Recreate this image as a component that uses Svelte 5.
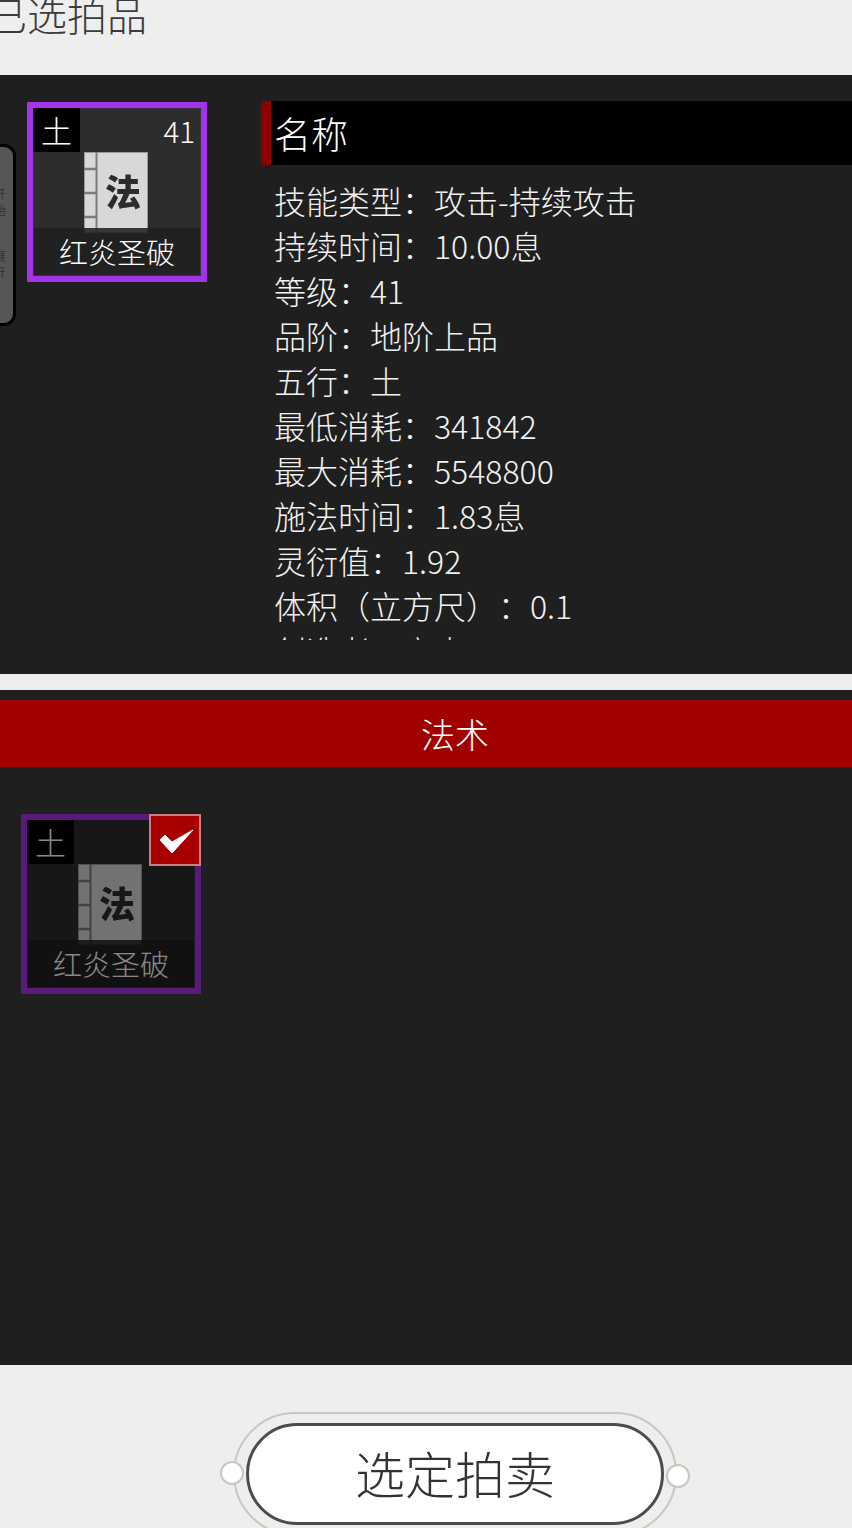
<script lang="ts">
  const rows = [
    "技能类型：攻击-持续攻击",
    "持续时间：10.00息",
    "等级：41",
    "品阶：地阶上品",
    "五行：土",
    "最低消耗：341842",
    "最大消耗：5548800",
    "施法时间：1.83息",
    "灵衍值：1.92",
    "体积（立方尺）：0.1",
    "创造者：高点",
  ];
</script>

{#snippet bookCard(level: string, picked: boolean)}
  <div class="card" class:picked>
    <div class="card-inner">
      <span class="tag">土</span>
      {#if level}<span class="level">{level}</span>{/if}
      <svg class="book" viewBox="0 0 64 81" aria-hidden="true">
        <rect x="0.5" y="0.5" width="63" height="80" fill="#d8d8d8" stroke="#9a9a9a" />
        <rect x="11.5" width="2" height="81" fill="#7c7c7c" />
        <path d="M0 17h12M0 41h12M0 65h12" stroke="#7c7c7c" stroke-width="2.4" />
        <text x="39" y="54" text-anchor="middle">法</text>
      </svg>
      <div class="name">红炎圣破</div>
    </div>
    {#if picked}
      <div class="shade"></div>
      <div class="check">
        <svg viewBox="0 0 48 48" aria-hidden="true">
          <path d="M9 24L14 19L21 26L42 14L21 37Z" fill="#fff" stroke="#fff" stroke-width="1" stroke-linejoin="round" />
        </svg>
      </div>
    {/if}
  </div>
{/snippet}

<div class="screen">
  <div class="page">
    <h2 class="title">已选拍品</h2>

    <section class="detail">
      <div class="handle">
        <span>开</span><span>始</span>
        <span class="sep">展</span><span>开</span>
      </div>
      {@render bookCard("41", false)}
      <div class="info">
        <div class="info-head">名称</div>
        <div class="info-body">
          {#each rows as r}
            <div class="row">{r}</div>
          {/each}
        </div>
      </div>
    </section>

    <section class="picker">
      <div class="bar">法术</div>
      <div class="grid">
        {@render bookCard("", true)}
      </div>
    </section>

    <div class="footer">
      <div class="ring">
        <span class="dot left"></span>
        <span class="dot right"></span>
        <button class="go">选定拍卖</button>
      </div>
    </div>
  </div>
</div>

<style>
  :global(body) {
    margin: 0;
    background: #eeeeee;
  }
  .screen {
    width: 852px;
    height: 1528px;
    overflow: hidden;
  }
  .page {
    width: 910px;
    font-family: "Noto Sans CJK SC", "Noto Sans", sans-serif;
    font-weight: 200;
    text-spacing-trim: space-all;
  }
  .title {
    margin: 0 0 0 -13px;
    height: 75px;
    font-size: 40px;
    font-weight: 200;
    line-height: 28px;
    color: #3c3c3c;
  }
  .detail {
    position: relative;
    height: 599px;
    background: #1f1f1f;
    display: flex;
    align-items: flex-start;
    padding-left: 27px;
    box-sizing: border-box;
  }
  .handle {
    position: absolute;
    left: -20px;
    top: 69px;
    width: 36px;
    height: 182px;
    border: 3px solid #000;
    border-radius: 12px;
    background: #565656;
    display: flex;
    flex-direction: column;
    align-items: flex-end;
    padding-top: 39px;
    padding-right: 7px;
    box-sizing: border-box;
    font-size: 12px;
    line-height: 16px;
    color: #222;
  }
  .handle .sep {
    margin-top: 30px;
  }
  .card {
    position: relative;
    margin-top: 27px;
    width: 180px;
    height: 180px;
    border: 6px solid #a333e8;
    box-sizing: border-box;
    flex: none;
  }
  .card-inner {
    position: relative;
    height: 100%;
    box-sizing: border-box;
    background: #2d2d2d;
    border: 1px solid #38303e;
  }
  .tag {
    position: absolute;
    left: -1px;
    top: -1px;
    width: 47px;
    height: 44px;
    background: #000;
    color: #fff;
    font-size: 31px;
    line-height: 44px;
    text-align: center;
  }
  .level {
    position: absolute;
    right: 5px;
    top: 3px;
    font-size: 29.5px;
    line-height: 36px;
    color: #fff;
  }
  .book {
    position: absolute;
    left: 50px;
    top: 43px;
    width: 64px;
    height: 81px;
    filter: blur(0.4px);
  }
  .book text {
    font-family: "Noto Sans CJK SC", sans-serif;
    font-weight: 900;
    font-size: 36px;
    fill: #2c2c2c;
  }
  .name {
    position: absolute;
    left: 0;
    right: 0;
    bottom: 0;
    height: 47px;
    background: rgba(32, 32, 32, 0.88);
    color: #fff;
    font-size: 29px;
    line-height: 47px;
    text-align: center;
  }
  .shade {
    position: absolute;
    inset: -6px;
    background: rgba(0, 0, 0, 0.47);
  }
  .check {
    position: absolute;
    right: -6px;
    top: -6px;
    width: 52px;
    height: 52px;
    background: #a80000;
    border: 2px solid #c88080;
    box-sizing: border-box;
  }
  .check svg {
    display: block;
    width: 100%;
    height: 100%;
  }
  .info {
    margin-left: 54px;
    margin-top: 26px;
    flex: 1;
  }
  .info-head {
    height: 64px;
    background: #000;
    border-left: 10px solid #8c0000;
    padding-left: 3px;
    color: #fff;
    font-size: 37px;
    line-height: 64px;
  }
  .info-body {
    height: 475px;
    overflow: hidden;
    padding: 13px 0 0 13px;
    box-sizing: border-box;
  }
  .row {
    font-size: 32px;
    line-height: 45px;
    color: #f2f2f2;
    white-space: nowrap;
  }
  .picker {
    margin-top: 16px;
    height: 675px;
    background: #1f1f1f;
    padding-top: 10px;
    box-sizing: border-box;
  }
  .bar {
    height: 67px;
    background: #a00000;
    color: #fff;
    font-size: 34px;
    line-height: 67px;
    text-align: center;
  }
  .grid {
    padding-left: 21px;
    padding-top: 47px;
    display: flex;
  }
  .grid .card {
    margin-top: 0;
  }
  .footer {
    display: flex;
    justify-content: center;
    padding-top: 47px;
  }
  .ring {
    position: relative;
    width: 444px;
    height: 124px;
    border: 2px solid #cac6be;
    border-radius: 62px;
    box-sizing: border-box;
    display: flex;
    justify-content: center;
    align-items: flex-start;
    padding-top: 9px;
  }
  .dot {
    position: absolute;
    width: 24px;
    height: 24px;
    background: #fff;
    border: 2px solid #cac6be;
    border-radius: 50%;
    box-sizing: border-box;
  }
  .dot.left {
    left: -15px;
    top: 47px;
  }
  .dot.right {
    right: -15px;
    top: 50px;
  }
  .go {
    flex: none;
    width: 418px;
    height: 102px;
    background: #fff;
    border: 3px solid #4c4c4c;
    border-radius: 51px;
    font-family: inherit;
    font-weight: 200;
    font-size: 50px;
    color: #333;
    padding: 0 0 5px;
  }
</style>
